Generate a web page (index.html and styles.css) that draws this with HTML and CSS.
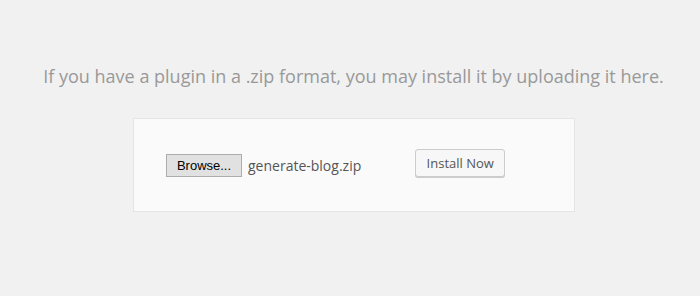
FILE: index.html
```html
<!DOCTYPE html>
<html lang="en">
<head>
  <meta charset="UTF-8">
  <title>Upload Plugin</title>
  <link rel="stylesheet" href="styles.css">
</head>
<body>
<div class="upload-plugin">
  <p class="install-help">If you have a plugin in a .zip format, you may install it by uploading it here.</p>
  <form class="upload-form">
    <!-- fake file input so it looks the same everywhere -->
    <span class="file-picker">
      <button type="button" class="browse">Browse...</button>
      <span class="file-name">generate-blog.zip</span>
    </span>
    <button type="submit" class="button">Install Now</button>
  </form>
</div>
</body>
</html>
```

FILE: styles.css
```css
body {
  margin: 0;
  background: #f1f1f1;
  font-family: 'Open Sans', sans-serif;
}

.upload-plugin {
  padding: 64px 0 0;
}

.install-help {
  margin: 0 0 30px;
  text-align: center;
  font-size: 18px;
  line-height: 24px;
  color: #999;
  padding-left: 7px;
}

.upload-form {
  box-sizing: border-box;
  width: 442px;
  height: 94px;
  margin-left: 133px;
  padding: 0 32px;
  background: #fafafa;
  border: 1px solid #e5e5e5;
  display: flex;
  align-items: center;
}

.file-picker {
  display: flex;
  align-items: center;
  gap: 6px;
  margin-top: 1px;
}

.browse {
  box-sizing: border-box;
  width: 76px;
  height: 23px;
  padding: 0;
  font-family: 'Liberation Sans', Arial, sans-serif;
  font-size: 13px;
  color: #000;
  background: #e1e1e1;
  border: 1px solid #adadad;
  border-radius: 0;
}

.file-name {
  font-size: 14px;
  color: #555;
}

.button {
  box-sizing: border-box;
  height: 28px;
  width: 90px;
  margin-left: 54px;
  margin-bottom: 4px;
  padding: 0 10px;
  font-family: 'Open Sans', sans-serif;
  font-size: 13px;
  color: #555;
  background: #f7f7f7;
  border: 1px solid #ccc;
  border-radius: 3px;
  box-shadow: 0 1px 0 #ccc;
  cursor: pointer;
}
```
